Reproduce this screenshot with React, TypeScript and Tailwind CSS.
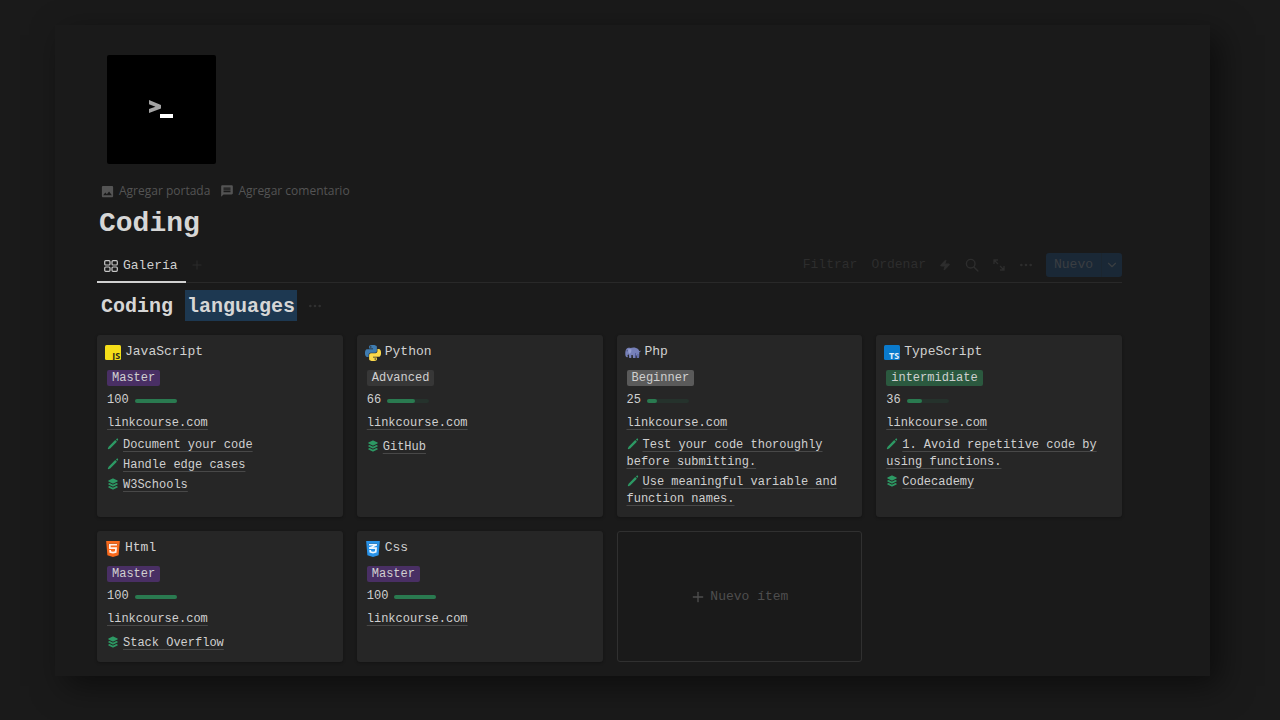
import React from 'react';
import { ChevronDown, Ellipsis, Plus, Zap } from 'lucide-react';
import { MdImage, MdMessage } from 'react-icons/md';
import { FaCss3Alt, FaHtml5 } from 'react-icons/fa';

type Level = 'Master' | 'Advanced' | 'Beginner' | 'intermidiate';

interface Language {
  name: string;
  icon: React.ComponentType;
  level: Level;
  progress: number;
  tips: string[];
  resources: string[];
}

const levelColors: Record<Level, string> = {
  Master: 'bg-[#492f64]',
  Advanced: 'bg-[#373737]',
  Beginner: 'bg-[#5a5a5a]',
  intermidiate: 'bg-[#2b593f]'
};

/* Language logos */

const JsLogo = () => (
  <svg viewBox="0 0 16 16" className="w-4 h-4">
    <rect width="16" height="15" rx="1.5" fill="#f5de19" />
    <text x="15.2" y="14" textAnchor="end" fontSize="9" fontWeight="700" fontFamily="Open Sans, sans-serif" fill="#2b2a1c">JS</text>
  </svg>
);

const TsLogo = () => (
  <svg viewBox="0 0 16 16" className="w-4 h-4">
    <rect width="16" height="15" rx="1.5" fill="#0a7acc" />
    <text x="15.2" y="14" textAnchor="end" fontSize="9" fontWeight="700" fontFamily="Open Sans, sans-serif" fill="#e6f1fa">TS</text>
  </svg>
);

const PythonLogo = () => (
  <svg viewBox="0 0 24 24" className="w-4 h-4">
    <path
      fill="#3f7cb0"
      d="M14.25.18l.9.2.73.26.59.3.45.32.34.34.25.34.16.33.1.3.04.26.02.2-.01.13V8.5l-.05.63-.13.55-.21.46-.26.38-.3.31-.33.25-.35.19-.35.14-.33.1-.3.07-.26.04-.21.02H8.77l-.69.05-.59.14-.5.22-.41.27-.33.32-.27.35-.2.36-.15.37-.1.35-.07.32-.04.27-.02.21v3.06H3.17l-.21-.03-.28-.07-.32-.12-.35-.18-.36-.26-.36-.36-.35-.46-.32-.59-.28-.73-.21-.88-.14-1.05-.05-1.23.06-1.22.16-1.04.24-.87.32-.71.36-.57.4-.44.42-.33.42-.24.4-.16.36-.1.32-.05.24-.01h.16l.06.01h8.16v-.83H6.18l-.01-2.75-.02-.37.05-.34.11-.31.17-.28.25-.26.31-.23.38-.2.44-.18.51-.15.58-.12.64-.1.71-.06.77-.04.84-.02 1.27.05zm-6.3 1.98l-.23.33-.08.41.08.41.23.34.33.22.41.09.41-.09.33-.22.23-.34.08-.41-.08-.41-.23-.33-.33-.22-.41-.09-.41.09z"
    />
    <path
      fill="#fbd94b"
      d="M21.04 6.11l.28.06.32.12.35.18.36.27.36.35.35.47.32.59.28.73.21.88.14 1.04.05 1.23-.06 1.23-.16 1.04-.24.86-.32.71-.36.57-.4.45-.42.33-.42.24-.4.16-.36.09-.32.05-.24.02-.16-.01h-8.22v.82h5.84l.01 2.76.02.36-.05.34-.11.31-.17.29-.25.25-.31.24-.38.2-.44.17-.51.15-.58.13-.64.09-.71.07-.77.04-.84.01-1.27-.04-1.07-.14-.9-.2-.73-.25-.59-.3-.45-.33-.34-.34-.25-.34-.16-.33-.1-.3-.04-.25-.02-.2.01-.13v-5.34l.05-.64.13-.54.21-.46.26-.38.3-.32.33-.24.35-.2.35-.14.33-.1.3-.06.26-.04.21-.02.13-.01h5.84l.69-.05.59-.14.5-.21.41-.28.33-.32.27-.35.2-.36.15-.36.1-.35.07-.32.04-.28.02-.21V6.07h2.09l.14.01zm-6.47 14.25l-.23.33-.08.41.08.41.23.33.33.23.41.08.41-.08.33-.23.23-.33.08-.41-.08-.41-.23-.33-.33-.23-.41-.08-.41.08z"
    />
  </svg>
);

const PhpLogo = () => (
  <svg viewBox="0 0 16 16" className="w-4 h-4">
    <path
      fill="#7680b8"
      d="M1.2 4.2C2.4 2.9 4 2.6 5.600 3.100 7 2.500 9 2.400 11 2.900c2 .5 3 1.800 3.200 3.400l1.300-.8c.3.900-.3 1.600-1.200 1.700.1 1.800-.1 4.400-.3 5.800h-2.200l-.2-2.600-1.200-.2-.2 2.800H8l-.3-3-1.300-.1-.1 3.100H4.200L3.900 9.600l-1 .1c-.5.700-.6 1.600.1 2-.5.700-1.600.7-2.100-.1C.1 10.200 0 6 1.200 4.200z"
    />
    <path d="M3.400 4c-.6 1.800-.2 3.800 1 4.700 1.300-.3 2.300-2.200 2-4.500" fill="#949dd0" />
    <path d="M10.500 8v5M13 9v4" stroke="#4c5595" strokeWidth="0.8" />
    <circle cx="2.100" cy="5.800" r="0.500" fill="#2b2f55" />
  </svg>
);

const HtmlLogo = () => (
  <svg viewBox="-32 32 448 448" className="w-4 h-4">
    <rect x="75" y="110" width="234" height="290" fill="#fff1ea" />
    <FaHtml5 size={512} x={-64} y={0} color="#f8691c" />
  </svg>
);

const CssLogo = () => (
  <svg viewBox="-32 32 448 448" className="w-4 h-4">
    <rect x="75" y="110" width="234" height="290" fill="#eef7ff" />
    <FaCss3Alt size={512} x={-64} y={0} color="#2892e8" />
  </svg>
);

/* Small glyphs */

const PencilIcon = () => (
  <svg viewBox="0 0 12 12" className="inline-block w-3 h-3 mr-1 align-[-2px]" fill="#2d9964">
    <path d="M8.200 2.100l1.700 1.700L3.200 10.500l-2 .7c-.2.100-.5-.2-.4-.4l.8-2zM9 1.400l.7-.6c.4-.3.900-.3 1.200 0 .3.300.4.900 0 1.300l-.6.800z" />
  </svg>
);

const StackIcon = () => (
  <svg viewBox="0 0 12 12" className="inline-block w-3 h-3 mr-1 align-[-2px]" fill="#2d9964">
    <path d="M6.300.6l4.200 2c.4.200.4.600 0 .8l-4.200 2c-.2.100-.5.100-.7 0l-4.100-2c-.4-.2-.4-.6 0-.8l4.100-2c.2-.1.500-.1.700 0z" />
    <path d="M1.500 5.600l1-.5 3.100 1.500c.2.100.5.100.7 0l3.100-1.500 1.100.5c.4.200.4.600 0 .8L6.300 8.400c-.2.100-.5.100-.7 0L1.500 6.400c-.4-.2-.4-.6 0-.8z" />
    <path d="M1.500 8.600l1-.5 3.100 1.500c.2.100.5.100.7 0l3.100-1.500 1.100.5c.4.200.4.600 0 .8l-4.200 2c-.2.100-.5.100-.7 0l-4.100-2c-.4-.2-.4-.6 0-.8z" />
  </svg>
);

const GalleryIcon = () => (
  <svg viewBox="0 0 14 12" className="w-[14px] h-3" fill="none" stroke="#c8c8c8" strokeWidth="1.200">
    <rect x="0.700" y="0.700" width="5.300" height="4.300" rx="1" />
    <rect x="8" y="0.700" width="5.300" height="4.300" rx="1" />
    <rect x="0.700" y="7" width="5.300" height="4.300" rx="1" />
    <rect x="8" y="7" width="5.300" height="4.300" rx="1" />
  </svg>
);

const SearchIcon = () => (
  <svg viewBox="0 0 14 14" className="w-[14px] h-[14px]" fill="none" stroke="currentColor" strokeWidth="1.400">
    <circle cx="5.700" cy="5.700" r="4.300" />
    <path d="M8.900 8.900l4 4" strokeLinecap="round" />
  </svg>
);

const ResizeIcon = () => (
  <svg viewBox="0 0 12 12" className="w-3 h-3" fill="none" stroke="currentColor" strokeWidth="1.300">
    <path d="M1 5V1h4M1 1l4 4M11 7v4H7M11 11L7 7" />
  </svg>
);

const TerminalLogo = () => (
  <svg viewBox="0 0 109 109" className="w-[109px] h-[109px] ml-[10px] rounded-[2px] bg-black">
    <path d="M42 45l12 5v3.600L42 58v-4l6.500-2.300L42 49.200z" fill="#a3a3a3" />
    <rect x="53" y="59" width="13" height="4" fill="#fff" />
  </svg>
);

const languages: Language[] = [
  {
    name: 'JavaScript',
    icon: JsLogo,
    level: 'Master',
    progress: 100,
    tips: ['Document your code', 'Handle edge cases'],
    resources: ['W3Schools']
  },
  { name: 'Python', icon: PythonLogo, level: 'Advanced', progress: 66, tips: [], resources: ['GitHub'] },
  {
    name: 'Php',
    icon: PhpLogo,
    level: 'Beginner',
    progress: 25,
    tips: ['Test your code thoroughly before submitting.', 'Use meaningful variable and function names.'],
    resources: []
  },
  {
    name: 'TypeScript',
    icon: TsLogo,
    level: 'intermidiate',
    progress: 36,
    tips: ['1. Avoid repetitive code by using functions.'],
    resources: ['Codecademy']
  },
  { name: 'Html', icon: HtmlLogo, level: 'Master', progress: 100, tips: [], resources: ['Stack Overflow'] },
  { name: 'Css', icon: CssLogo, level: 'Master', progress: 100, tips: [], resources: [] }
];

const linkStyle = 'underline decoration-[#484848] decoration-1 underline-offset-[3px]';

const LanguageCard = ({ language }: { language: Language }) => (
  <article className="rounded-[3px] bg-[#262626] pt-2 pb-[9px] text-xs leading-[17px] text-[#d0d0d0] shadow-[0_1px_3px_rgba(0,0,0,0.3)]">
    <h3 className="flex items-end gap-1 px-2 text-[13px] leading-[18px]">
      <language.icon />
      <span>{language.name}</span>
    </h3>
    <div className="px-[10px]">
      <div className="mt-[9px] flex">
        <span className={`rounded-[2px] px-[5px] leading-4 ${levelColors[language.level]}`}>{language.level}</span>
      </div>
      <div className="mt-[6px] flex items-center gap-[6px]">
        <span>{language.progress}</span>
        <div className="h-1 w-[42px] rounded-full bg-[#25322c]">
          <div className="h-1 rounded-full bg-[#2a7a50]" style={{ width: `${language.progress}%` }} />
        </div>
      </div>
      <p className="mt-[6px]">
        <a href="#" className={linkStyle}>linkcourse.com</a>
      </p>
      <ul className={`flex flex-col gap-[3px] ${language.tips.length ? 'mt-[5px]' : 'mt-[7px]'}`}>
        {language.tips.map((tip) => (
          <li key={tip}>
            <PencilIcon />
            <a href="#" className={linkStyle}>{tip}</a>
          </li>
        ))}
        {language.resources.map((resource) => (
          <li key={resource}>
            <StackIcon />
            <a href="#" className={linkStyle}>{resource}</a>
          </li>
        ))}
      </ul>
    </div>
  </article>
);

const Toolbar = () => (
  <div className="flex items-center text-[13px] text-[#2d2d2d]">
    <button className="mr-[14px]">Filtrar</button>
    <button className="mr-[6px]">Ordenar</button>
    <button aria-label="Automatizaciones" className="w-[27px] flex justify-center">
      <Zap size={12} fill="currentColor" />
    </button>
    <button aria-label="Buscar" className="w-[27px] flex justify-center">
      <SearchIcon />
    </button>
    <button aria-label="Expandir" className="w-[27px] flex justify-center">
      <ResizeIcon />
    </button>
    <button aria-label="Más" className="w-[27px] flex justify-center">
      <Ellipsis size={16} />
    </button>
    <div className="ml-[6px] flex h-6 rounded-[3px] bg-[#1a2836] text-[#3a3e42]">
      <button className="px-2 border-r border-[#1b2630]">Nuevo</button>
      <button aria-label="Más opciones de nuevo" className="w-5 flex items-center justify-center">
        <ChevronDown size={14} />
      </button>
    </div>
  </div>
);

export default function App() {
  return (
    <div className="min-h-screen bg-[#1a1a1a] pt-[25px] pr-[70px] pb-11 pl-[55px] font-['Liberation_Mono',monospace]">
      <main className="bg-[#1a1a1a] pt-[30px] pr-[88px] pb-[14px] pl-[42px] shadow-[10px_10px_30px_rgba(0,0,0,0.5)]">
        <TerminalLogo />

        <div className="mt-[18px] ml-[3px] flex items-center gap-[10px] font-['Open_Sans',sans-serif] text-xs leading-[18px] text-[#545454]">
          <button className="flex items-center gap-1">
            <MdImage size={15} />
            Agregar portada
          </button>
          <button className="flex items-center gap-1">
            <MdMessage size={14} />
            Agregar comentario
          </button>
        </div>

        <h1 className="mt-[6px] ml-[2px] text-[28px] leading-9 font-bold text-[#d6d6d6]">Coding</h1>

        {/* View tabs */}
        <div className="mt-[6px] flex h-[35px] items-stretch justify-between border-b border-[#292929]">
          <div className="flex items-center">
            <button className="-mb-px flex h-[35px] items-center gap-[5px] border-b-2 border-[#d0d0d0] pt-[2px] pr-2 pl-[7px] text-[13px] text-[#d0d0d0]">
              <GalleryIcon />
              Galería
            </button>
            <button aria-label="Agregar vista" className="ml-1 text-[#2a2a2a]">
              <Plus size={14} />
            </button>
          </div>
          <Toolbar />
        </div>

        <div className="mt-[7px] ml-1 flex items-center gap-[10px]">
          <h2 className="text-xl leading-[29px] font-bold text-[#d6d6d6]">
            Coding <span className="inline-block bg-[#1d3851] px-[2px] pt-[2px]">languages</span>
          </h2>
          <button aria-label="Opciones" className="text-[#303030]">
            <Ellipsis size={16} />
          </button>
        </div>

        {/* Gallery */}
        <section className="mt-[14px] grid grid-cols-4 gap-[14px]">
          {languages.map((language) => (
            <LanguageCard key={language.name} language={language} />
          ))}
          <button className="flex min-h-[131px] items-center justify-center gap-1 rounded-[3px] border border-[#303030] text-[13px] text-[#4e4e4e]">
            <Plus size={16} />
            Nuevo ítem
          </button>
        </section>
      </main>
    </div>
  );
}
